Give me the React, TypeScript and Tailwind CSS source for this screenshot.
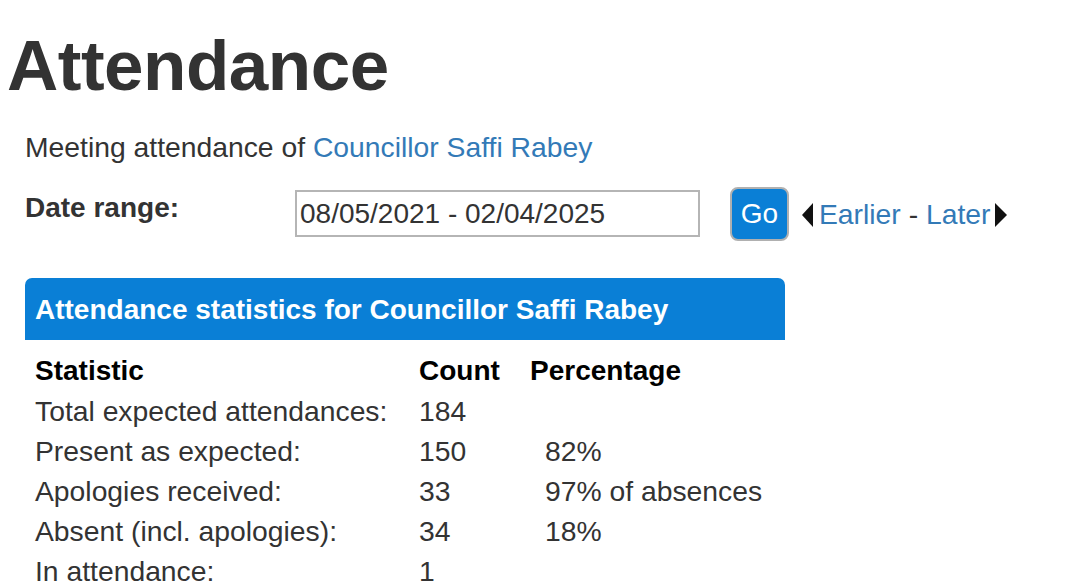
import React from 'react';

const rows = [
  { label: 'Total expected attendances:', count: '184', pct: '' },
  { label: 'Present as expected:', count: '150', pct: '82%' },
  { label: 'Apologies received:', count: '33', pct: '97% of absences' },
  { label: 'Absent (incl. apologies):', count: '34', pct: '18%' },
  { label: 'In attendance:', count: '1', pct: '' },
];

export default function App() {
  return (
    <div className="min-h-screen bg-white text-[#333] font-['Liberation_Sans',Arial,sans-serif] overflow-hidden">
      {/* Title */}
      <h1 className="ml-[7px] mt-[27px] text-[71px] leading-[77px] font-bold tracking-[-0.5px]">Attendance</h1>

      <p className="ml-[25px] mt-[23px] text-[28.3px] leading-[40px]">
        Meeting attendance of <a href="#" className="text-[#337ab7]">Councillor Saffi Rabey</a>
      </p>

      {/* Date range form */}
      <div className="ml-[25px] mt-[20px] flex items-start">
        <label className="w-[270px] pt-[1px] text-[28px] leading-[40px] font-bold">Date range:</label>
        <div className="mt-[3px] flex h-[47px] w-[405px] items-center border-2 border-[#b5b5b5] px-[3px] pt-[1px] text-[28px]">
          08/05/2021 - 02/04/2025
        </div>
        <button className="ml-[30px] h-[54px] w-[59px] rounded-[8px] border-2 border-[#b0b0b0] bg-[#0a7fd6] text-[28px] text-white">
          Go
        </button>
        <div className="ml-[13px] flex h-[54px] items-center pt-[1px] text-[28.3px]">
          <svg width="11" height="24" viewBox="0 0 11 24" className="mr-[6px]">
            <path d="M11 0 L0 12 L11 24 Z" fill="#111" />
          </svg>
          <a href="#" className="text-[#337ab7]">Earlier</a>
          <span className="whitespace-pre"> - </span>
          <a href="#" className="text-[#337ab7]">Later</a>
          <svg width="12" height="24" viewBox="0 0 12 24" className="ml-[5px]">
            <path d="M0 0 L12 12 L0 24 Z" fill="#111" />
          </svg>
        </div>
      </div>

      {/* Statistics panel */}
      <div className="ml-[25px] mt-[37px] w-[760px]">
        <div className="flex h-[62px] items-center rounded-t-[7px] bg-[#0a7fd6] px-[10px] pt-[2px] text-[28px] font-bold text-white">
          Attendance statistics for Councillor Saffi Rabey
        </div>
        <div className="mt-[11px] grid grid-cols-[384px_111px_1fr] pl-[10px] text-[28.3px] leading-[40px]">
          <div className="font-bold text-black text-[28px]">Statistic</div>
          <div className="font-bold text-black text-[28px]">Count</div>
          <div className="font-bold text-black text-[28px]">Percentage</div>
          {rows.map((r) => (
            <React.Fragment key={r.label}>
              <div>{r.label}</div>
              <div>{r.count}</div>
              <div className="pl-[15px]">{r.pct}</div>
            </React.Fragment>
          ))}
        </div>
      </div>
    </div>
  );
}
